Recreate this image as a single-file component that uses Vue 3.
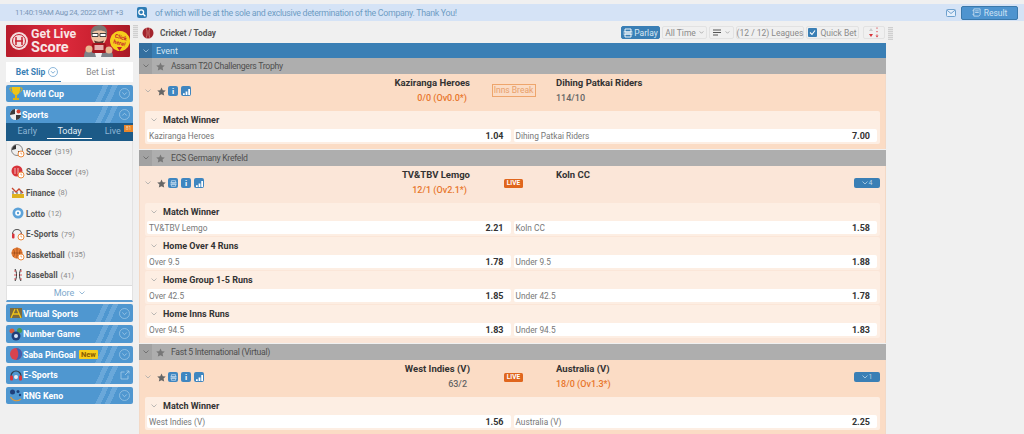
<script setup>
const sports = [
  { name: 'Soccer', count: 319, icon: 'soccer' },
  { name: 'Saba Soccer', count: 49, icon: 'saba' },
  { name: 'Finance', count: 8, icon: 'finance' },
  { name: 'Lotto', count: 12, icon: 'lotto' },
  { name: 'E-Sports', count: 79, icon: 'esports' },
  { name: 'Basketball', count: 135, icon: 'basketball' },
  { name: 'Baseball', count: 41, icon: 'baseball' }
]

const lowerMenus = [
  { name: 'Virtual Sports', icon: 'virtual' },
  { name: 'Number Game', icon: 'number' },
  { name: 'Saba PinGoal', icon: 'pingoal', isNew: true },
  { name: 'E-Sports', icon: 'esports', external: true },
  { name: 'RNG Keno', icon: 'keno' }
]

const leagues = [
  {
    name: 'Assam T20 Challengers Trophy',
    first: true,
    home: 'Kaziranga Heroes',
    away: 'Dihing Patkai Riders',
    homeScore: '0/0 (Ov0.0*)',
    awayScore: '114/10',
    scoreSide: 'home',
    status: 'Inns Break',
    parlay: false,
    more: '',
    markets: [
      { title: 'Match Winner', left: 'Kaziranga Heroes', leftOdds: '1.04', right: 'Dihing Patkai Riders', rightOdds: '7.00' }
    ]
  },
  {
    name: 'ECS Germany Krefeld',
    home: 'TV&TBV Lemgo',
    away: 'Koln CC',
    homeScore: '12/1 (Ov2.1*)',
    awayScore: '',
    scoreSide: 'home',
    status: 'LIVE',
    parlay: true,
    more: '4',
    markets: [
      { title: 'Match Winner', left: 'TV&TBV Lemgo', leftOdds: '2.21', right: 'Koln CC', rightOdds: '1.58' },
      { title: 'Home Over 4 Runs', left: 'Over 9.5', leftOdds: '1.78', right: 'Under 9.5', rightOdds: '1.88' },
      { title: 'Home Group 1-5 Runs', left: 'Over 42.5', leftOdds: '1.85', right: 'Under 42.5', rightOdds: '1.78' },
      { title: 'Home Inns Runs', left: 'Over 94.5', leftOdds: '1.83', right: 'Under 94.5', rightOdds: '1.83' }
    ]
  },
  {
    name: 'Fast 5 International (Virtual)',
    home: 'West Indies (V)',
    away: 'Australia (V)',
    homeScore: '63/2',
    awayScore: '18/0 (Ov1.3*)',
    scoreSide: 'away',
    status: 'LIVE',
    parlay: true,
    more: '1',
    markets: [
      { title: 'Match Winner', left: 'West Indies (V)', leftOdds: '1.56', right: 'Australia (V)', rightOdds: '2.25' }
    ]
  }
]
</script>

<template>
  <div class="page">
    <header class="topbar">
      <span class="clock">11:40:19AM Aug 24, 2022 GMT +3</span>
      <span class="search-btn">
        <svg width="8" height="8" viewBox="0 0 10 10"><circle cx="4" cy="4" r="3" fill="none" stroke="#fff" stroke-width="1.6" /><path d="M6.3 6.3 9.2 9.2" stroke="#fff" stroke-width="1.8" /></svg>
      </span>
      <span class="ticker">of which will be at the sole and exclusive determination of the Company. Thank You!</span>
      <svg class="mail" width="10" height="8" viewBox="0 0 10 8"><rect x="0.5" y="0.5" width="9" height="7" rx="1" fill="#e4eefa" stroke="#6ea1cf" /><path d="M1 1.2 5 4.5 9 1.2" fill="none" stroke="#6ea1cf" /></svg>
      <button class="result-btn">
        <svg width="9" height="9" viewBox="0 0 10 10"><path d="M2 1h7v6.5L7.5 9H2zM0.5 3H2M0.5 7H2M3.5 3.2h4M3.5 5h4" fill="none" stroke="#cfe2f3" stroke-width="0.9" /></svg>
        Result
      </button>
    </header>

    <div class="content">
      <aside class="sidebar">
        <div class="banner">
          <span class="banner-logo">
            <svg width="20" height="20" viewBox="0 0 20 20"><circle cx="10" cy="10" r="9" fill="#f3dcdc" /><circle cx="10" cy="10" r="6.500" fill="none" stroke="#c5202f" stroke-width="1" /><path d="M7 6v8M13 6v8M6 10h8" stroke="#c5202f" stroke-width="1.500" /></svg>
          </span>
          <span class="banner-text"><span class="line-get">Get Live</span><span class="line-score">Score</span></span>
          <svg class="banner-man" width="30" height="32" viewBox="0 0 30 32">
            <path d="M0 32c0-8 5-11 14-11s15 3 15 11z" fill="#7d8188" />
            <path d="M9 21h11l-3 11h-5z" fill="#f2f2f2" />
            <ellipse cx="15" cy="10.500" rx="8" ry="9.500" fill="#efc3a2" />
            <path d="M7 10C5.500 4 10 0 15.500 0S24 4 23 10l-1.500-3C19 5 12 5 9 7z" fill="#7d7772" />
            <path d="M8 8.500h6v3H8zM16 8.500h6v3h-6z" fill="#fff" stroke="#2c2c2c" stroke-width="0.9" />
            <path d="M10 15.500c3 1.500 7 1.500 10 0l-1 2.500h-8z" fill="#5b3a33" />
            <rect x="8" y="18" width="14" height="10" rx="1.500" fill="#a4161f" />
            <rect x="10.500" y="20" width="9" height="5" fill="#e6b0ad" />
            <circle cx="5" cy="24" r="3.500" fill="#e9b993" />
            <circle cx="25" cy="25" r="3.500" fill="#e9b993" />
          </svg>
          <span class="click-here">Click<br>here!</span>
          <svg class="click-arrow" width="5" height="4" viewBox="0 0 5 4"><path d="M0 0h5L2.500 4z" fill="#c5202f" /></svg>
        </div>

        <div class="bet-tabs">
          <div class="bet-tab active">
            Bet Slip
            <svg width="10" height="10" viewBox="0 0 10 10"><circle cx="5" cy="5" r="4.500" fill="none" stroke="#5f9bcb" stroke-width="0.7" /><path d="M3 4.200 5 6.200 7 4.200" fill="none" stroke="#5f9bcb" stroke-width="0.8" /></svg>
          </div>
          <div class="bet-tab">Bet List</div>
        </div>

        <div class="menu-bar">
          <svg class="menu-icon" width="14" height="15" viewBox="0 0 14 15"><path d="M3 1h8v3c0 3-2 5-4 5S3 7 3 4z" fill="#f0c419" /><path d="M3 2H1c0 3 1 4 3 4M11 2h2c0 3-1 4-3 4" fill="none" stroke="#e2b10e" /><path d="M6 9h2v3h2v2H4v-2h2z" fill="#e2b10e" /></svg>
          <span class="menu-name">World Cup</span>
          <svg class="menu-toggle" width="11" height="11" viewBox="0 0 11 11"><circle cx="5.500" cy="5.500" r="5" fill="none" stroke="#a5cbe8" stroke-width="0.7" /><path d="M3.300 4.500 5.500 6.700 7.700 4.500" fill="none" stroke="#a5cbe8" stroke-width="0.8" /></svg>
        </div>

        <div class="sports-box">
          <div class="menu-bar open">
            <svg class="menu-icon" width="13" height="13" viewBox="0 0 13 13"><circle cx="6.500" cy="6.500" r="5.500" fill="#eee" /><path d="M1 7a5.500 5.500 0 0 1 5-6v5zM7 12a5.500 5.500 0 0 0 5-5H7z" fill="#3a3a3a" /><circle cx="9.500" cy="3.500" r="2" fill="#d6402f" /></svg>
            <span class="menu-name">Sports</span>
            <svg class="menu-toggle" width="11" height="11" viewBox="0 0 11 11"><circle cx="5.500" cy="5.500" r="5" fill="none" stroke="#a5cbe8" stroke-width="0.7" /><path d="M3.300 6.500 5.500 4.300 7.700 6.500" fill="none" stroke="#a5cbe8" stroke-width="0.8" /></svg>
          </div>
          <div class="sport-tabs">
            <span class="sport-tab">Early</span>
            <span class="sport-tab selected">Today</span>
            <span class="sport-tab">Live<em class="live-count">81</em></span>
          </div>
          <ul class="sport-list">
            <li v-for="sport in sports" :key="sport.name" class="sport-item">
              <span class="sport-icon">
                <svg width="14" height="14" viewBox="0 0 14 14">
                  <template v-if="sport.icon === 'soccer'">
                    <circle cx="6" cy="6" r="5.500" fill="#eee" stroke="#444" stroke-width="0.6" /><path d="M1 6a5 5 0 0 1 4-5v4zM7 11a5 5 0 0 0 4-4H7z" fill="#333" />
                  </template>
                  <template v-else-if="sport.icon === 'saba'">
                    <circle cx="6" cy="6" r="5.500" fill="#d8343a" /><path d="M4 3v6M7 3v6" stroke="#f2b8b8" stroke-width="1" />
                  </template>
                  <template v-else-if="sport.icon === 'finance'">
                    <path d="M1 13V9h12v4z" fill="#e0b21f" /><path d="M1 3 5 7 8 4 12 8" fill="none" stroke="#c9472e" stroke-width="1.300" /><path d="M2 9V6M6 9V7M10 9V6" stroke="#556" stroke-width="1" />
                  </template>
                  <template v-else-if="sport.icon === 'lotto'">
                    <circle cx="7" cy="7" r="5.500" fill="#5da2d8" /><circle cx="7" cy="7" r="2.800" fill="#fff" /><circle cx="7" cy="7" r="1.200" fill="#5da2d8" />
                  </template>
                  <template v-else-if="sport.icon === 'esports'">
                    <path d="M1.500 7a4.500 4.500 0 0 1 9 0" fill="none" stroke="#555" stroke-width="1.100" /><rect x="1" y="6.500" width="2.500" height="5" rx="1" fill="#d8343a" /><rect x="8.500" y="6.500" width="2.500" height="5" rx="1" fill="#d8343a" />
                  </template>
                  <template v-else-if="sport.icon === 'basketball'">
                    <circle cx="6" cy="6" r="5.500" fill="#e67c35" /><path d="M.5 6h11M6 .5v11M2 2c2 2 2 6 0 8M10 2c-2 2-2 6 0 8" fill="none" stroke="#8e3f10" stroke-width="0.6" />
                  </template>
                  <template v-else>
                    <path d="M4 1c2 3 2 9 0 12M10 1c-2 3-2 9 0 12" fill="none" stroke="#333" stroke-width="1" /><path d="M3 3h2M3 7h2.500M3 11h2" stroke="#d8343a" stroke-width="0.8" /><path d="M9 3h2M8.500 7H11M9 11h2" stroke="#d8343a" stroke-width="0.8" />
                  </template>
                  <template v-if="sport.icon !== 'finance' && sport.icon !== 'lotto' && sport.icon !== 'baseball'">
                    <circle cx="10" cy="10" r="3" fill="#fff" stroke="#ee8a3c" stroke-width="1" /><path d="M10 8.500V10h1.200" fill="none" stroke="#ee8a3c" stroke-width="0.7" />
                  </template>
                </svg>
              </span>
              <span class="sport-name">{{ sport.name }}</span>
              <span class="sport-count">({{ sport.count }})</span>
            </li>
          </ul>
          <div class="more-row">
            More
            <svg width="6" height="4" viewBox="0 0 6 4"><path d="M.5.500 3 3 5.500.500" fill="none" stroke="#7ea9cd" stroke-width="0.8" /></svg>
          </div>
        </div>

        <div v-for="menu in lowerMenus" :key="menu.name" class="menu-bar lower">
          <svg class="menu-icon" width="14" height="14" viewBox="0 0 14 14">
            <template v-if="menu.icon === 'virtual'">
              <rect x="1" y="2" width="12" height="10" fill="#7b6a3d" /><path d="M2 12 6 3M8 3l4 9M4 8h6" stroke="#f0c419" stroke-width="1.300" />
            </template>
            <template v-else-if="menu.icon === 'number'">
              <circle cx="3" cy="4" r="2.500" fill="#d8593a" /><circle cx="10.500" cy="3.500" r="2.500" fill="#4c9a4c" /><circle cx="7" cy="9" r="4.500" fill="#1f3f7a" /><circle cx="7" cy="9" r="2" fill="#d7e3f2" />
            </template>
            <template v-else-if="menu.icon === 'pingoal'">
              <circle cx="7" cy="7" r="6" fill="#d8434f" /><path d="M7 1a6 6 0 0 1 0 12c3-3 3-9 0-12z" fill="#3f5fb0" />
            </template>
            <template v-else-if="menu.icon === 'esports'">
              <path d="M2 8a5 5 0 0 1 10 0" fill="none" stroke="#2f3d4a" stroke-width="1.200" /><rect x="1" y="7.500" width="3" height="5" rx="1" fill="#d8343a" /><rect x="10" y="7.500" width="3" height="5" rx="1" fill="#d8343a" /><circle cx="7" cy="9" r="2" fill="#e9eef3" />
            </template>
            <template v-else>
              <circle cx="3.500" cy="3" r="2.500" fill="#1f3f7a" /><circle cx="9" cy="2.500" r="1.500" fill="#1f3f7a" /><circle cx="11" cy="6" r="1.200" fill="#1f3f7a" /><path d="M1.500 8c2 4 7 5 10.500 2" fill="none" stroke="#e09a3a" stroke-width="1.200" />
            </template>
          </svg>
          <span class="menu-name">{{ menu.name }}</span>
          <span v-if="menu.isNew" class="new-tag">New</span>
          <svg v-if="menu.external" class="menu-toggle" width="10" height="10" viewBox="0 0 10 10"><path d="M8 5.500V9H1V2h3.500M5 5l4-4M6.500 1H9v2.500" fill="none" stroke="#a5cbe8" stroke-width="0.8" /></svg>
          <svg v-else class="menu-toggle" width="11" height="11" viewBox="0 0 11 11"><circle cx="5.500" cy="5.500" r="5" fill="none" stroke="#a5cbe8" stroke-width="0.7" /><path d="M3.300 4.500 5.500 6.700 7.700 4.500" fill="none" stroke="#a5cbe8" stroke-width="0.8" /></svg>
        </div>
      </aside>

      <span class="grip"></span>

      <main class="main">
        <div class="toolbar">
          <svg width="12" height="12" viewBox="0 0 12 12"><circle cx="6" cy="6" r="5.500" fill="#a3242c" /><path d="M4 .8c1.500 3 1.500 7.400 0 10.400M8 .8c-1.500 3-1.500 7.400 0 10.400" fill="none" stroke="#e9b9a8" stroke-width="0.5" /></svg>
          <span class="crumb">Cricket / Today</span>
          <div class="tools">
            <span class="tool parlay">
              <svg width="10" height="10" viewBox="0 0 10 10"><path d="M2 1h6v3H2zM2 6h6v3H2zM0.500 4h9M0.500 6h9" fill="none" stroke="#fff" stroke-width="0.9" /></svg>
              Parlay
            </span>
            <span class="tool time">All Time
              <svg width="5" height="3" viewBox="0 0 6 4"><path d="M.5.500 3 3 5.500.500" fill="none" stroke="#888" stroke-width="0.8" /></svg>
            </span>
            <span class="tool sorter">
              <svg width="9" height="7" viewBox="0 0 9 7"><path d="M0 1h8M0 3.500h8M0 6h5" stroke="#555" stroke-width="1" /></svg>
              <svg width="5" height="3" viewBox="0 0 6 4"><path d="M.5.500 3 3 5.500.500" fill="none" stroke="#888" stroke-width="0.8" /></svg>
            </span>
            <span class="tool leagues">(12 / 12) Leagues</span>
            <span class="tool quick">
              <svg width="9" height="9" viewBox="0 0 9 9"><rect width="9" height="9" rx="1" fill="#3a7fb5" /><path d="M2 4.500 4 6.500 7 2.500" fill="none" stroke="#fff" stroke-width="1.100" /></svg>
              Quick Bet
            </span>
            <span class="tool arrows">
              <svg width="12" height="11" viewBox="0 0 12 11"><path d="M3 1 5 4H1z" fill="#ccc" /><path d="M3 10 1 7h4z" fill="#d8343a" /><path d="M9 .5v2M9 4v2M9 7.500V8" stroke="#d8343a" stroke-width="1" stroke-dasharray="1.200 0.800" /><path d="M9 10.500 7.500 8.500h3z" fill="#d8343a" /></svg>
            </span>
          </div>
        </div>

        <div class="event-bar">
          <span class="fold-cell">
            <svg width="6" height="4" viewBox="0 0 6 4"><path d="M.5.500 3 3 5.500.500" fill="none" stroke="#a8cbe6" stroke-width="0.8" /></svg>
          </span>
          <span>Event</span>
        </div>

        <section v-for="league in leagues" :key="league.name" class="league">
          <div class="league-bar">
            <span class="fold-cell">
              <svg width="6" height="4" viewBox="0 0 6 4"><path d="M.5.500 3 3 5.500.500" fill="none" stroke="#666" stroke-width="0.8" /></svg>
            </span>
            <svg class="league-star" width="9" height="9" viewBox="0 0 24 24"><path d="M12 1l3.400 7.400 8 1-5.900 5.500 1.600 8L12 19l-7.100 3.900 1.600-8L.6 9.400l8-1z" fill="#777" /></svg>
            <span>{{ league.name }}</span>
          </div>

          <div class="match" :class="{ warm: league.first || league.home === 'West Indies (V)' }">
            <div class="match-head">
              <div class="match-controls">
                <svg width="6" height="4" viewBox="0 0 6 4"><path d="M.5.500 3 3 5.500.500" fill="none" stroke="#aaa" stroke-width="0.8" /></svg>
                <svg class="match-star" width="9" height="9" viewBox="0 0 24 24"><path d="M12 1l3.400 7.400 8 1-5.900 5.500 1.600 8L12 19l-7.100 3.900 1.600-8L.6 9.400l8-1z" fill="#666" /></svg>
                <span v-if="league.parlay" class="mini-btn">
                  <svg width="7" height="7" viewBox="0 0 10 10"><path d="M2 1h6v3H2zM2 6h6v3H2zM0.500 4h9M0.500 6h9" fill="none" stroke="#cfe2f3" stroke-width="1" /></svg>
                </span>
                <span class="mini-btn info">i</span>
                <span class="mini-btn">
                  <svg width="7" height="7" viewBox="0 0 8 8"><path d="M0 8V6h2v2zM3 8V4h2v4zM6 8V1h2v7z" fill="#fff" /></svg>
                </span>
              </div>
              <div class="team home">
                <strong>{{ league.home }}</strong>
                <span :class="league.scoreSide === 'home' ? 'score live-score' : 'score'">{{ league.homeScore }}</span>
              </div>
              <div class="status">
                <span v-if="league.status === 'LIVE'" class="live-tag">LIVE</span>
                <span v-else class="break-tag">{{ league.status }}</span>
              </div>
              <div class="team away">
                <strong>{{ league.away }}</strong>
                <span :class="league.scoreSide === 'away' ? 'score live-score' : 'score'">{{ league.awayScore }}</span>
              </div>
              <span v-if="league.more" class="more-btn">
                <svg width="6" height="4" viewBox="0 0 6 4"><path d="M.5.500 3 3 5.500.500" fill="none" stroke="#b9d5ea" stroke-width="0.8" /></svg>
                {{ league.more }}
              </span>
            </div>

            <div v-for="market in league.markets" :key="market.title" class="market">
              <div class="market-title">
                <svg width="6" height="4" viewBox="0 0 6 4"><path d="M.5.500 3 3 5.500.500" fill="none" stroke="#aaa" stroke-width="0.8" /></svg>
                <span>{{ market.title }}</span>
              </div>
              <div class="odds-row">
                <div class="odds-cell"><span class="pick">{{ market.left }}</span><b>{{ market.leftOdds }}</b></div>
                <div class="odds-cell"><span class="pick">{{ market.right }}</span><b>{{ market.rightOdds }}</b></div>
              </div>
            </div>
          </div>
        </section>
      </main>
      <span class="grip right"></span>
    </div>
  </div>
</template>

<style>
html, body {
  margin: 0;
  height: 100%;
  overflow: hidden;
  background: #f0f0f0;
}
</style>

<style scoped>
.page {
  height: 434px;
  overflow: hidden;
  font-family: Roboto, "Open Sans", sans-serif;
  background: #f0f0f0;
  color: #444;
}
.topbar {
  display: flex;
  align-items: center;
  height: 17px;
  margin-top: 4px;
  background: #d5e3f6;
  font-size: 8px;
}
.clock {
  width: 137px;
  padding-left: 15px;
  box-sizing: border-box;
  color: #7b98b8;
  font-size: 7.800px;
  letter-spacing: -0.35px;
  white-space: nowrap;
}
.search-btn {
  display: flex;
  align-items: center;
  justify-content: center;
  width: 10px;
  height: 11px;
  border-radius: 2px;
  background: #2f7db5;
}
.ticker {
  flex: 1;
  margin-left: 8px;
  color: #6f9dc4;
  font-size: 8.800px;
  letter-spacing: -0.3px;
  white-space: nowrap;
}
.mail {
  margin-right: 5px;
}
.result-btn {
  display: flex;
  align-items: center;
  justify-content: center;
  gap: 3px;
  width: 57px;
  height: 14px;
  margin-right: 6px;
  padding: 0;
  border: 1px solid #3a78aa;
  border-radius: 2px;
  background: #4e94cf;
  color: #cfe2f3;
  font: 8.5px Roboto, sans-serif;
}
.content {
  display: flex;
  align-items: flex-start;
  padding-top: 4px;
}
.sidebar {
  width: 127px;
  margin-left: 6px;
  flex: none;
}
.banner {
  position: relative;
  width: 124px;
  height: 32px;
  overflow: hidden;
  background: linear-gradient(90deg, #b81c2b, #dc2a3c 45%, #c9202f 75%, #a81a26);
  border-radius: 1px;
}
.banner-logo {
  position: absolute;
  left: 3px;
  top: 6px;
}
.banner-text {
  position: absolute;
  left: 25px;
  top: 1px;
  display: flex;
  flex-direction: column;
  color: #f8e6e6;
  font-weight: 700;
}
.line-get {
  font-size: 12.400px;
  line-height: 15px;
}
.line-score {
  font-size: 14.500px;
  line-height: 14px;
}
.banner-man {
  position: absolute;
  left: 78px;
  top: 0;
}
.click-here {
  position: absolute;
  right: 0;
  top: 6px;
  width: 20px;
  height: 20px;
  border-radius: 50%;
  background: #f6cd1c;
  color: #c5202f;
  font-size: 5.500px;
  font-weight: 700;
  line-height: 6px;
  text-align: center;
  padding-top: 3px;
  box-sizing: border-box;
  transform: rotate(15deg);
}
.click-arrow {
  position: absolute;
  right: 8px;
  top: 22px;
}
.bet-tabs {
  display: flex;
  height: 20px;
  margin-top: 5px;
  background: #fff;
}
.bet-tab {
  display: flex;
  align-items: center;
  justify-content: center;
  gap: 3px;
  width: 70px;
  margin-left: 7px;
  box-sizing: border-box;
  color: #8a8a8a;
  font-size: 8.500px;
}
.bet-tab.active {
  width: 55px;
  margin-left: 4px;
  padding-left: 3px;
  border-bottom: 1.500px solid #3a7fb5;
  color: #3a7fb5;
  font-weight: 700;
}
.menu-bar {
  display: flex;
  align-items: center;
  height: 17px;
  margin-top: 3px;
  padding-left: 3px;
  padding-right: 3px;
  border-radius: 2px;
  background: linear-gradient(115deg, #4f97d0 72%, #6aa8da 72%, #6aa8da 76%, #4f97d0 76%, #4f97d0 79%, #6aa8da 79%, #6aa8da 83%, #4f97d0 83%);
  color: #fff;
  font-size: 8.800px;
  font-weight: 700;
}
.menu-bar.lower {
  height: 17.600px;
}
.sports-box + .menu-bar {
  margin-top: 2.200px;
}
.menu-icon {
  flex: none;
  margin-right: 0;
}
.menu-name {
  margin-left: 0;
  padding-top: 1px;
  white-space: nowrap;
}
.menu-toggle {
  margin-left: auto;
}
.new-tag {
  margin-left: 3px;
  padding: 0 2px;
  border-radius: 1px;
  background: #f6cd1c;
  color: #8a5b00;
  font-size: 7.500px;
  line-height: 9px;
}
.sports-box {
  margin-top: 4px;
  border-bottom: 2px solid #5a9bd0;
  background: #f2f2f2;
  border-left: 1px solid #e2e2e2;
  border-right: 1px solid #e2e2e2;
  box-sizing: border-box;
}
.sports-box .menu-bar {
  margin: 0 -1px;
  border-radius: 2px 2px 0 0;
}
.sport-tabs {
  display: flex;
  align-items: flex-start;
  height: 18px;
  margin: 0 -1px;
  background: #1c5a87;
}
.sport-tab {
  position: relative;
  display: flex;
  align-items: center;
  justify-content: center;
  height: 16px;
  width: 42px;
  margin-left: 1px;
  box-sizing: border-box;
  color: #8cb5d5;
  font-size: 9px;
}
.sport-tab.selected {
  width: 46px;
  margin-left: 0;
  color: #e4eef6;
  border-bottom: 1px solid #fff;
}
.live-count {
  position: absolute;
  right: 0;
  top: 2px;
  width: 9px;
  height: 7px;
  background: #e8862c;
  color: #f7d9b5;
  font-size: 5px;
  font-style: normal;
  line-height: 7px;
  text-align: center;
}
.sport-list {
  margin: 0;
  padding: 0;
  list-style: none;
}
.sport-item {
  display: flex;
  align-items: center;
  height: 20.600px;
  padding-left: 4px;
}
.sport-icon {
  display: flex;
  width: 14px;
  margin-right: 1px;
}
.sport-name {
  padding-top: 1px;
  color: #555;
  font-size: 8.200px;
  font-weight: 700;
}
.sport-count {
  margin-left: 3px;
  padding-top: 1px;
  color: #8a8a8a;
  font-size: 7.500px;
}
.more-row {
  display: flex;
  align-items: center;
  justify-content: center;
  gap: 5px;
  height: 15px;
  background: #fff;
  border-top: 1px solid #dcdcdc;
  box-sizing: border-box;
  color: #7ea9cd;
  font-size: 9px;
}
.grip {
  flex: none;
  width: 5px;
  height: 13px;
  margin: 0 1px 0 0;
  background: repeating-linear-gradient(#cfcfcf 0 1px, #e6e6e6 1px 2px);
}
.grip.right {
  margin: 2px 0 0 2px;
}
.main {
  width: 747px;
  flex: none;
  margin-left: 0;
}
.toolbar {
  display: flex;
  align-items: center;
  height: 13px;
  padding: 1px 0 4px 3px;
}
.crumb {
  margin-left: 6px;
  color: #555;
  font-size: 8.300px;
  font-weight: 700;
}
.tools {
  display: flex;
  align-items: center;
  gap: 2px;
  margin-left: auto;
  margin-right: 1px;
}
.tool {
  display: flex;
  align-items: center;
  justify-content: center;
  gap: 3px;
  height: 13px;
  border: 1px solid #e2e2e2;
  border-radius: 2px;
  box-sizing: border-box;
  color: #8a8a8a;
  font-size: 8.500px;
  white-space: nowrap;
}
.parlay {
  width: 39px;
  border-color: #3a7fb5;
  background: #3a7fb5;
  color: #d8e8f4;
  gap: 1px;
}
.time {
  width: 45px;
}
.sorter {
  width: 25px;
}
.leagues {
  width: 68px;
}
.quick {
  width: 53px;
}
.arrows {
  width: 22px;
  margin-left: 2px;
}
.event-bar {
  display: flex;
  align-items: center;
  height: 15px;
  background: #3a7fb5;
  color: #d4e6f4;
  font-size: 9px;
}
.event-bar .fold-cell {
  background: #336f9f;
  margin-right: 4px;
}
.fold-cell {
  display: flex;
  align-items: center;
  justify-content: center;
  width: 13px;
  height: 100%;
  flex: none;
}
.league {
  margin-bottom: 1px;
}
.league-bar {
  display: flex;
  align-items: center;
  height: 16px;
  background: #aeaeae;
  color: #4f4f4f;
  font-size: 8.700px;
  letter-spacing: -0.3px;
}
.league-bar .fold-cell {
  background: #a2a2a2;
}
.league-star {
  margin: 0 6px 0 4px;
}
.match {
  padding: 0 5px 4px;
  background: #fbe6d8;
  border-left: 1px solid #f3d9c6;
  border-right: 1px solid #f3d9c6;
}
.match.warm {
  background: #fbdcc5;
}
.match-head {
  position: relative;
  display: grid;
  grid-template-columns: 326px 85px 1fr;
  height: 37px;
}
.match-controls {
  position: absolute;
  left: 0;
  top: 12px;
  display: flex;
  align-items: center;
  height: 10px;
}
.match-star {
  margin: 0 2px 0 6px;
}
.mini-btn {
  display: flex;
  align-items: center;
  justify-content: center;
  width: 10px;
  height: 10px;
  margin-left: 3px;
  border-radius: 2px;
  background: #3f86c0;
  color: #fff;
  font-size: 8px;
  font-weight: 700;
}
.match-star + .mini-btn {
  margin-left: 0;
}
.team {
  display: flex;
  flex-direction: column;
  padding-top: 1px;
  font-size: 9.500px;
  line-height: 15px;
}
.team strong {
  margin-bottom: 1px;
  color: #333;
  font-weight: 700;
}
.team.home {
  grid-column: 1;
  text-align: right;
  align-items: flex-end;
  padding-right: 1px;
}
.team.home .score {
  margin-right: 3px;
}
.status {
  grid-column: 2;
  display: flex;
  justify-content: center;
  padding-top: 10px;
  align-self: start;
}
.team.away {
  grid-column: 3;
}
.score {
  color: #666;
  font-weight: 500;
  font-size: 9px;
}
.live-score {
  color: #e8762c;
}
.break-tag {
  width: 44px;
  height: 13px;
  border: 1px solid #eea56c;
  box-sizing: border-box;
  color: #e8a06a;
  font-size: 8.500px;
  line-height: 11px;
  text-align: center;
}
.live-tag {
  width: 19px;
  height: 9px;
  margin-top: 3px;
  border-radius: 1.500px;
  background: #e0661d;
  color: #fff;
  font-size: 6.500px;
  font-weight: 700;
  line-height: 9px;
  text-align: center;
}
.more-btn {
  position: absolute;
  right: 0;
  top: 12px;
  display: flex;
  align-items: center;
  justify-content: center;
  gap: 1px;
  width: 26px;
  height: 10px;
  border-radius: 2px;
  background: #3a7fb5;
  color: #b9d5ea;
  font-size: 7px;
}
.market {
  height: 33px;
  margin-bottom: 1px;
  padding: 0 3px 0 2px;
  background: #fdeee3;
  border-radius: 2px;
  box-sizing: border-box;
}
.market-title {
  display: flex;
  align-items: center;
  height: 18px;
  padding-left: 4px;
  color: #333;
  font-size: 9px;
  font-weight: 700;
}
.market-title span {
  margin-left: 6px;
}
.odds-row {
  display: grid;
  grid-template-columns: 1fr 1fr;
  gap: 3px;
}
.odds-cell {
  display: flex;
  justify-content: space-between;
  align-items: center;
  height: 13px;
  padding: 0 7px 0 2px;
  border-radius: 2px;
  background: #fff;
  font-size: 9px;
}
.pick {
  color: #777;
  font-size: 8.300px;
}
.odds-cell b {
  color: #333;
  font-weight: 700;
}
</style>
